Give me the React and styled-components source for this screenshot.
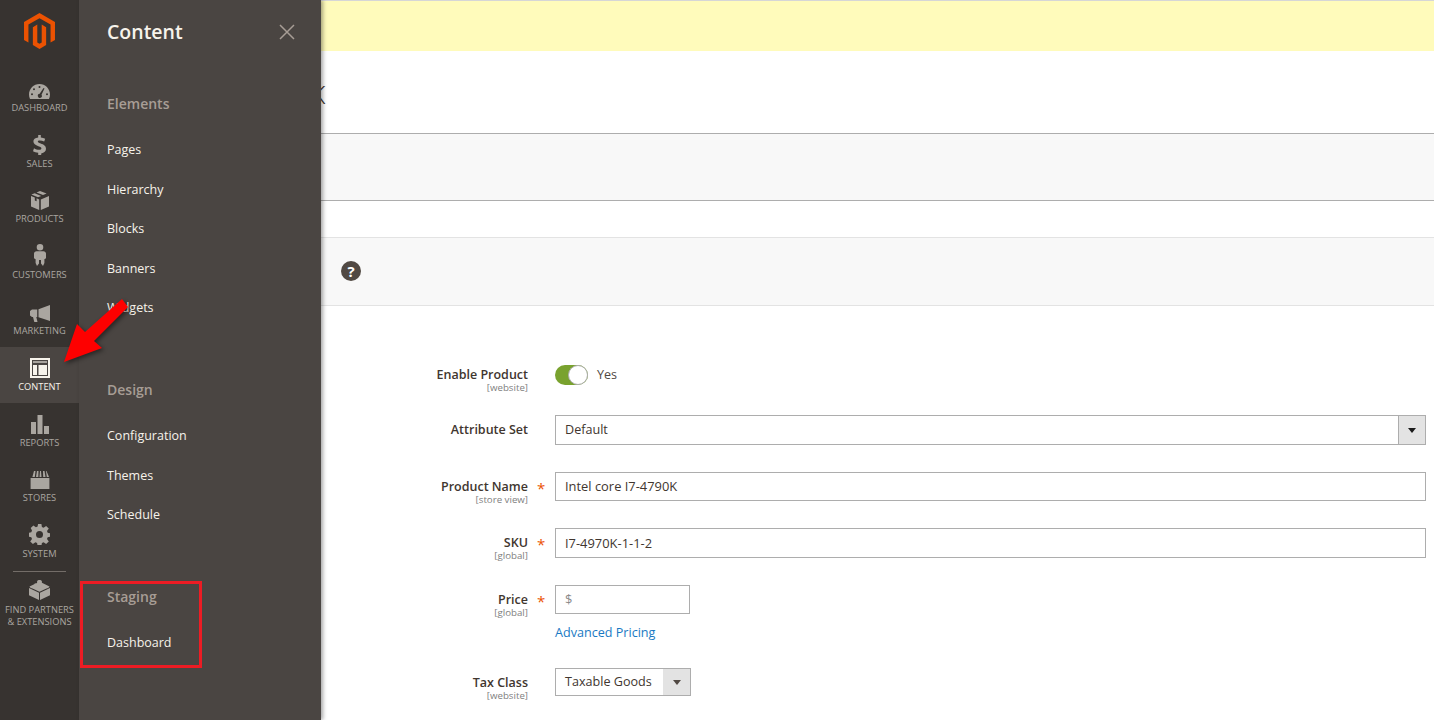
import React from 'react';
import styled, { createGlobalStyle } from 'styled-components';

const GlobalStyle = createGlobalStyle`
  html, body {
    margin: 0;
    height: 720px;
    overflow: hidden;
    background: #fff;
    font-family: "Open Sans", "Liberation Sans", sans-serif;
    color: #41362f;
  }
`;

const Page = styled.div`
  position: relative;
  display: flex;
  height: 720px;
  overflow: hidden;
`;

const Sidebar = styled.nav`
  flex: 0 0 79px;
  display: flex;
  flex-direction: column;
  background: #373330;
`;

const LogoBox = styled.div`
  height: 68px;
  display: flex;
  justify-content: center;
  padding-top: 13px;
  box-sizing: border-box;
`;

const NavItem = styled.a`
  height: 55.8px;
  box-sizing: border-box;
  padding-bottom: 10px;
  display: flex;
  flex-direction: column;
  align-items: center;
  justify-content: flex-end;
  gap: 3px;
  font-size: 9.3px;
  line-height: 12px;
  text-transform: uppercase;
  text-align: center;
  white-space: nowrap;
  color: ${p => (p.$active ? '#f7f3eb' : '#aaa6a0')};
  background: ${p => (p.$active ? '#4a4542' : 'transparent')};
  svg {
    fill: ${p => (p.$active ? '#f7f3eb' : '#aaa6a0')};
    display: block;
  }
`;

const NavDivider = styled.div`
  height: 1px;
  margin: 1px 13px 8px;
  background: #736d68;
`;

const PartnerItem = styled(NavItem)`
  height: auto;
  padding: 0;
  gap: 4px;
`;

const Panel = styled.aside`
  position: absolute;
  top: 0;
  left: 79px;
  bottom: 0;
  width: 242px;
  box-sizing: border-box;
  padding: 18px 0 0 28px;
  background: #4a4542;
  box-shadow: 2px 0 4px rgba(0, 0, 0, 0.35);
`;

const PanelHead = styled.div`
  display: flex;
  align-items: center;
  justify-content: space-between;
  height: 28px;
  padding-right: 26px;
  margin-bottom: 48px;
`;

const PanelTitle = styled.h1`
  margin: 0;
  font-size: 19.5px;
  line-height: 28px;
  font-weight: 600;
  color: #f7f3eb;
`;

const PanelGroup = styled.section`
  display: flex;
  flex-direction: column;
  margin-bottom: 42.2px;
`;

const GroupTitle = styled.h2`
  margin: 0 0 26.3px;
  font-size: 14px;
  line-height: 20px;
  font-weight: 600;
  color: #a79d95;
`;

const PanelLink = styled.a`
  height: 39.5px;
  font-size: 12.5px;
  line-height: 20px;
  color: #f7f3eb;
`;

const Main = styled.main`
  flex: 1;
  min-width: 0;
  border-top: 1px solid #d6d6d6;
`;

const Notice = styled.div`
  height: 50px;
  background: #fffbbb;
`;

const TitleBar = styled.div`
  height: 83px;
  box-sizing: border-box;
  padding: 24px 0 0 30px;
  font-size: 25.5px;
  line-height: 38px;
  font-weight: 300;
  color: #41362f;
  border-bottom: 1px solid #adadad;
`;

const ActionBar = styled.div`
  height: 67px;
  box-sizing: border-box;
  background: #f8f8f8;
  border-bottom: 1px solid #adadad;
`;

const Spacer = styled.div`
  height: 36px;
`;

const SectionBar = styled.div`
  height: 69px;
  display: flex;
  align-items: center;
  box-sizing: border-box;
  padding: 0 0 2px 262px;
  background: #f8f8f8;
  border-top: 1px solid #e3e3e3;
  border-bottom: 1px solid #e3e3e3;
`;

const Form = styled.form`
  padding: 59px 8px 0 0;
`;

const Field = styled.div`
  display: grid;
  grid-template-columns: 449px 27px 1fr;
  height: ${p => p.$pitch}px;
`;

const LabelBox = styled.div`
  padding-top: ${p => (p.$flush ? 1 : 6)}px;
  text-align: right;
`;

const Label = styled.div`
  font-size: 12.5px;
  line-height: 18px;
  font-weight: 600;
  color: #41362f;
`;

const Scope = styled.div`
  margin-top: -1px;
  font-size: 9.7px;
  line-height: 10px;
  color: #808080;
`;

const Star = styled.span`
  padding: 7px 0 0 9px;
  font-size: 15px;
  line-height: 18px;
  color: #eb5202;
`;

const Input = styled.div`
  height: ${p => p.$h || 30}px;
  width: ${p => (p.$w ? `${p.$w}px` : 'auto')};
  box-sizing: border-box;
  padding: 0 9px;
  border: 1px solid #adadad;
  background: #fff;
  font-size: 12.9px;
  line-height: ${p => (p.$h || 30) - 2}px;
  color: ${p => (p.$muted ? '#8a8a8a' : '#41362f')};
`;

const Select = styled.div`
  display: flex;
  height: ${p => p.$h || 30}px;
  width: ${p => (p.$w ? `${p.$w}px` : 'auto')};
  box-sizing: border-box;
  border: 1px solid #adadad;
  font-size: 12.6px;
  line-height: ${p => (p.$h || 30) - 2}px;
  color: #41362f;
`;

const SelectValue = styled.div`
  flex: 1;
  padding-left: 9px;
`;

const SelectButton = styled.div`
  flex: 0 0 27px;
  box-sizing: border-box;
  display: flex;
  align-items: center;
  justify-content: center;
  background: #e3e3e3;
  border-left: ${p => (p.$plain ? 0 : 1)}px solid #adadad;
  &::after {
    content: '';
    border-style: solid;
    border-width: 5px 4.5px 0;
    border-color: ${p => (p.$plain ? '#514943' : '#1a1a1a')} transparent transparent;
  }
`;

const ToggleRow = styled.div`
  display: flex;
  align-items: center;
  gap: 9px;
  height: 20px;
  font-size: 12.6px;
  color: #514943;
`;

const ToggleText = styled.span`
  padding-bottom: 2px;
`;

const Toggle = styled.span`
  display: flex;
  justify-content: flex-end;
  width: 33px;
  height: 20px;
  box-sizing: border-box;
  border-radius: 10px;
  background: #79a22e;
`;

const Knob = styled.span`
  width: 20px;
  height: 20px;
  box-sizing: border-box;
  border-radius: 50%;
  border: 1px solid #adadad;
  background: #fff;
`;

const AdvancedLink = styled.a`
  display: block;
  margin-top: 9px;
  font-size: 12.6px;
  line-height: 20px;
  color: #1979c3;
`;

const HelpIcon = styled.span`
  width: 20px;
  height: 20px;
  border-radius: 50%;
  background: #514943;
  color: #fff;
  font-size: 15px;
  line-height: 20px;
  font-weight: 700;
  text-align: center;
`;

const RedBox = styled.div`
  position: absolute;
  left: 80px;
  top: 581px;
  width: 122px;
  height: 87px;
  box-sizing: border-box;
  border: 3px solid #ed1c24;
  pointer-events: none;
`;

const ArrowMark = styled.svg`
  position: absolute;
  left: 55px;
  top: 290px;
  filter: drop-shadow(2px 2px 2px rgba(0, 0, 0, 0.45));
  pointer-events: none;
`;

const Logo = () => (
  <svg width="31" height="36" viewBox="1.6 0 20.8 24">
    <path
      fill="#eb5202"
      d="M12 24l-4.455-2.572v-12l2.97-1.715v12.001l1.485.902 1.485-.902V7.714l2.97 1.715v12L12 24zM22.391 6v12l-2.969 1.714V7.715L12 3.43 4.574 7.715v12L1.609 18V6L12 0l10.391 6z"
    />
  </svg>
);

const icons = {
  gauge: (
    <svg width="21" height="15" viewBox="0 0 21 15">
      <path d="M10.500 0C4.700 0 0 4.700 0 10.500c0 1.600.3 3.100 1 4.500h19c.7-1.400 1-2.900 1-4.500C21 4.700 16.300 0 10.500 0Zm0 2a1 1 0 1 1 0 2 1 1 0 0 1 0-2ZM5 4.200a1 1 0 1 1 0 2 1 1 0 0 1 0-2Zm-2 5a1 1 0 1 1 0 2 1 1 0 0 1 0-2Zm15 0a1 1 0 1 1 0 2 1 1 0 0 1 0-2ZM14.500 4l1 .5-3 6.200a2 2 0 1 1-1.800-.9L14.500 4Z" fillRule="evenodd" />
    </svg>
  ),
  dollar: (
    <svg width="13" height="20" viewBox="0 0 13 20">
      <path d="M5.200 0h2.600v2.400c1.700.2 3.200.7 4.400 1.400l-1 2.800c-1.500-.8-3-1.200-4.400-1.200-1.400 0-2 .5-2 1.200 0 .8.8 1.200 2.900 2 2.900 1.100 5.300 2.200 5.300 5.200 0 2.500-1.700 4.200-4.800 4.700V20H5.200v-2.300c-2-.1-3.800-.6-5.200-1.500l1-2.900c1.600 1 3.400 1.500 5 1.500s2.400-.6 2.400-1.400c0-.9-.8-1.400-3-2.200C2.400 10.100.4 9 .4 6.300.4 4.200 2 2.700 5.200 2.400V0Z" />
    </svg>
  ),
  box: (
    <svg width="18" height="19" viewBox="0 0 18 19">
      <path d="M9 0 5.500 1.400 12 4.100l3.600-1.500L9 0Zm-5.300 2.200L.4 3.500 7 6.300l3.200-1.400-6.500-2.700ZM0 5v10.400L8.200 19V8.400L5.600 7.300v3L3.800 9.500v-3L0 5Zm18 0L9.800 8.400V19L18 15.400V5Z" />
    </svg>
  ),
  person: (
    <svg width="12" height="22" viewBox="0 0 12 22">
      <path d="M6 0a3.300 3.300 0 1 1 0 6.600A3.300 3.300 0 0 1 6 0ZM2.500 7.300h7c1.300 0 2.500 1 2.500 2.300v4.700l-1.600 1V19L9 22l-2-2.500V16H5v3.500L3 22l-1.400-3v-3.700l-1.600-1V9.600c0-1.300 1.200-2.300 2.500-2.300Z" />
    </svg>
  ),
  horn: (
    <svg width="20" height="17" viewBox="0 0 20 17">
      <path d="M20 0v16L8.500 12.300V4.200L20 0ZM7.200 4.500v7.400H6.300L7.500 17H4.300L3 11.900H2L0 10.600V6l2-1.500h5.200Z" />
    </svg>
  ),
  content: (
    <svg width="20" height="20" viewBox="0 0 20 20">
      <path fillRule="evenodd" d="M0 0h20v20H0V0Zm2 2v16h16V2H2Z" />
      <path opacity="0.55" d="M3 3h14v2H3V3Z" />
      <path d="M3 7h4v10H3V7Zm5.500 0H17v10H8.500V7Z" />
    </svg>
  ),
  bars: (
    <svg width="18" height="19" viewBox="0 0 18 19">
      <path d="M0 7h5v12H0V7Zm6.500-7h5v19h-5V0ZM13 11h5v8h-5v-8Z" />
    </svg>
  ),
  store: (
    <svg width="22" height="18" viewBox="0 0 22 18">
      <path d="M5 0h1.500L5.800 6H3.400L5 0Zm3 0h1.500L9.300 6H7l1-6Zm3 0h1l.5 6h-2L11 0Zm3 0h1.500l1 6h-2.300L14 0Zm3 0h.5L20 6h-2.200L17 0ZM1.600 7h18.800v11H1.600V7Z" />
    </svg>
  ),
  gear: (
    <svg width="21" height="21" viewBox="0 0 21 21">
      <path fillRule="evenodd" d="m8.600 0h3.800l.5 3 1.700.7 2.500-1.800 2.700 2.700-1.800 2.500.7 1.700 3 .5v3.400l-3 .5-.7 1.700 1.800 2.500-2.700 2.700-2.500-1.800-1.700.7-.5 3H8.600l-.5-3-1.700-.7-2.500 1.800-2.700-2.700 1.800-2.500-.7-1.700-3-.5V8.800l3-.5.7-1.700L1.700 4.100l2.700-2.700 2.500 1.800 1.700-.7.5-3Zm1.900 7a3.500 3.500 0 1 0 0 7 3.500 3.500 0 0 0 0-7Z" />
    </svg>
  ),
  brick: (
    <svg width="21" height="20" viewBox="0 0 21 20">
      <path d="M10.500 0c1.300 0 2.400.6 2.400 1.400v1.300l7.600 3.900c-.3.9-1.600 1.600-3 2l-7 3.200-7-3.200C2.100 8.200.8 7.500.5 6.600l4.700-2.400c.2-.6 1.200-1 2.400-1l.5-.5V1.400C8.100.6 9.200 0 10.500 0ZM0 8l10 4.800V20L0 15.200V8Zm21 0v7.200L11 20v-7.200L21 8Z" />
    </svg>
  ),
};

const navItems = [
  ['gauge', 'Dashboard'],
  ['dollar', 'Sales'],
  ['box', 'Products'],
  ['person', 'Customers'],
  ['horn', 'Marketing'],
  ['content', 'Content', true],
  ['bars', 'Reports'],
  ['store', 'Stores'],
  ['gear', 'System'],
];

const groups = [
  { title: 'Elements', links: ['Pages', 'Hierarchy', 'Blocks', 'Banners', 'Widgets'] },
  { title: 'Design', links: ['Configuration', 'Themes', 'Schedule'] },
  { title: 'Staging', links: ['Dashboard'] },
];

const App = () => (
  <Page>
    <GlobalStyle />
    <Sidebar>
      <LogoBox>
        <Logo />
      </LogoBox>
      {navItems.map(([icon, label, active]) => (
        <NavItem key={label} $active={active}>
          {icons[icon]}
          {label}
        </NavItem>
      ))}
      <NavDivider />
      <PartnerItem>
        {icons.brick}
        <span>
          Find Partners
          <br />
          &amp; Extensions
        </span>
      </PartnerItem>
    </Sidebar>

    <Main>
      <Notice />
      <TitleBar>Intel core I7-4790K</TitleBar>
      <ActionBar />
      <Spacer />
      <SectionBar>
        <HelpIcon>?</HelpIcon>
      </SectionBar>
      <Form>
        <Field $pitch={50}>
          <LabelBox $flush>
            <Label>Enable Product</Label>
            <Scope>[website]</Scope>
          </LabelBox>
          <span />
          <ToggleRow>
            <Toggle>
              <Knob />
            </Toggle>
            <ToggleText>Yes</ToggleText>
          </ToggleRow>
        </Field>
        <Field $pitch={57}>
          <LabelBox>
            <Label>Attribute Set</Label>
          </LabelBox>
          <span />
          <Select>
            <SelectValue>Default</SelectValue>
            <SelectButton />
          </Select>
        </Field>
        <Field $pitch={56}>
          <LabelBox>
            <Label>Product Name</Label>
            <Scope>[store view]</Scope>
          </LabelBox>
          <Star>*</Star>
          <Input $h={29}>Intel core I7-4790K</Input>
        </Field>
        <Field $pitch={57}>
          <LabelBox>
            <Label>SKU</Label>
            <Scope>[global]</Scope>
          </LabelBox>
          <Star>*</Star>
          <Input>I7-4970K-1-1-2</Input>
        </Field>
        <Field $pitch={83}>
          <LabelBox>
            <Label>Price</Label>
            <Scope>[global]</Scope>
          </LabelBox>
          <Star>*</Star>
          <div>
            <Input $h={29} $w={135} $muted>$</Input>
            <AdvancedLink>Advanced Pricing</AdvancedLink>
          </div>
        </Field>
        <Field $pitch={40}>
          <LabelBox>
            <Label>Tax Class</Label>
            <Scope>[website]</Scope>
          </LabelBox>
          <span />
          <Select $h={28} $w={136}>
            <SelectValue>Taxable Goods</SelectValue>
            <SelectButton $plain />
          </Select>
        </Field>
      </Form>
    </Main>

    <Panel>
      <PanelHead>
        <PanelTitle>Content</PanelTitle>
        <svg width="16" height="16" viewBox="0 0 16 16">
          <path d="M1 1l14 14M15 1 1 15" stroke="#a79d95" strokeWidth="1.5" fill="none" />
        </svg>
      </PanelHead>
      {groups.map(group => (
        <PanelGroup key={group.title}>
          <GroupTitle>{group.title}</GroupTitle>
          {group.links.map(link => (
            <PanelLink key={link}>{link}</PanelLink>
          ))}
        </PanelGroup>
      ))}
    </Panel>

    <RedBox />
    <ArrowMark width="80" height="80" viewBox="55 290 80 80">
      <path fill="#fe0000" d="M122 299 128 307 94 341 102 348 64 362 77 324 85 332Z" />
    </ArrowMark>
  </Page>
);

export default App;
